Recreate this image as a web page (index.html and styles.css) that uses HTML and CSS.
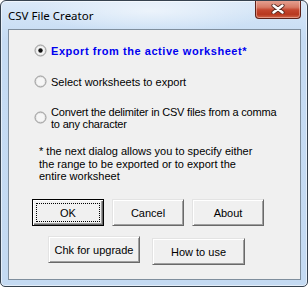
FILE: index.html
```html
<!DOCTYPE html>
<html lang="en">
<head>
    <meta charset="UTF-8">
    <meta name="viewport" content="width=device-width, initial-scale=1.0">
    <title>CSV File Creator</title>
    <link rel="stylesheet" href="styles.css">
</head>
<body>
    <div class="window">
        <div class="titlebar">
            <span class="title">CSV File Creator</span>
            <div class="close-btn">
                <svg width="14" height="10" viewBox="0 0 14 10">
                    <path d="M2.5 1.5 L11.5 8.5 M11.5 1.5 L2.5 8.5" stroke="#5a2a22" stroke-width="4.2" stroke-linecap="round"/>
                    <path d="M2.5 1.5 L11.5 8.5 M11.5 1.5 L2.5 8.5" stroke="#ffffff" stroke-width="2.4" stroke-linecap="round"/>
                </svg>
            </div>
        </div>

        <div class="client">
            <label class="option first">
                <svg class="radio" width="13" height="13" viewBox="0 0 13 13">
                    <circle cx="6.5" cy="6.5" r="5.5" fill="#e2e2e2" stroke="#979797"/>
                    <circle cx="6.5" cy="6.5" r="4" fill="#f6f6f6"/>
                    <circle cx="6.5" cy="6.5" r="2.2" fill="#111"/>
                </svg>
                <span class="option-text bold">Export from the active worksheet*</span>
            </label>

            <label class="option second">
                <svg class="radio" width="13" height="13" viewBox="0 0 13 13">
                    <circle cx="6.5" cy="6.5" r="5.5" fill="#e2e2e2" stroke="#979797"/>
                    <circle cx="6.5" cy="6.5" r="4" fill="#f6f6f6"/>
                </svg>
                <span class="option-text">Select worksheets to export</span>
            </label>

            <label class="option third">
                <svg class="radio" width="13" height="13" viewBox="0 0 13 13">
                    <circle cx="6.5" cy="6.5" r="5.5" fill="#e2e2e2" stroke="#979797"/>
                    <circle cx="6.5" cy="6.5" r="4" fill="#f6f6f6"/>
                </svg>
                <span class="option-text multi">Convert the delimiter in CSV files from a comma<br>to any character</span>
            </label>

            <p class="note">* the next dialog allows you to specify either<br>the range to be exported or to export the<br>entire worksheet</p>

            <div class="btn-row main-row">
                <button class="btn btn-default">OK</button>
                <button class="btn">Cancel</button>
                <button class="btn">About</button>
            </div>

            <div class="btn-row extra-row">
                <button class="btn wide">Chk for upgrade</button>
                <button class="btn wide lower">How to use</button>
            </div>
        </div>
    </div>
</body>
</html>
```

FILE: styles.css
```css
body {
    margin: 0;
    padding: 0;
    background: #fff;
}

.window {
    width: 308px;
    height: 287px;
    box-sizing: border-box;
    border: 1px solid #36424f;
    border-radius: 6px 6px 5px 5px;
    background: linear-gradient(to bottom, #dbe9f8 0px, #cfe2f6 18px, #c5dbf3 40px, #c4daf2 100%);
    box-shadow: inset 0 0 0 1px rgba(255, 255, 255, 0.55);
    overflow: hidden;
}

.titlebar {
    height: 28px;
    display: flex;
    align-items: flex-start;
    justify-content: space-between;
    background: radial-gradient(ellipse 120px 22px at 150px 10px, rgba(255, 255, 255, 0.55), rgba(255, 255, 255, 0));
}

.title {
    font-family: "Noto Sans", "Open Sans", sans-serif;
    font-size: 11.5px;
    line-height: 16px;
    color: #000;
    margin: 7px 0 0 7px;
}

.close-btn {
    width: 46px;
    height: 19px;
    margin: -1px 6px 0 0;
    box-sizing: border-box;
    border: 1px solid #5e2118;
    border-top: none;
    border-radius: 0 0 4px 4px;
    background: linear-gradient(to bottom, #e7a596 0%, #d77b66 40%, #c4462f 55%, #b8381f 80%, #d0654a 100%);
    box-shadow: inset 0 0 0 1px rgba(255, 220, 210, 0.45);
    display: flex;
    align-items: center;
    justify-content: center;
}

.client {
    width: 293px;
    height: 251px;
    margin-left: 7px;
    box-sizing: border-box;
    border: 1px solid #7f8e9d;
    background: #f0f0f0;
    padding-top: 15px;
    font-family: "Liberation Sans", Arial, sans-serif;
    font-size: 11px;
    color: #000;
}

.option {
    display: flex;
    align-items: center;
    gap: 4px;
    padding-left: 25px;
}

.radio {
    flex: none;
    margin-top: -2px;
}

.option-text {
    line-height: 13px;
}

.option-text.bold {
    font-weight: bold;
    color: #0000f0;
    letter-spacing: 0.55px;
}

.option-text.multi {
    line-height: 12px;
    letter-spacing: -0.2px;
}

.second {
    margin-top: 18px;
}

.third {
    margin-top: 17px;
}

.note {
    margin: 15px 0 0 0;
    padding-left: 30px;
    line-height: 12.5px;
}

.btn-row {
    display: flex;
    align-items: flex-start;
}

.main-row {
    margin-top: 16.5px;
    padding-left: 23px;
    gap: 8px;
}

.extra-row {
    margin-top: 10px;
    padding-left: 39px;
    gap: 12px;
}

.btn {
    width: 72px;
    height: 27px;
    padding: 0;
    box-sizing: border-box;
    font-family: "Liberation Sans", Arial, sans-serif;
    font-size: 11px;
    color: #000;
    background: #f0f0f0;
    border: 1px solid;
    border-color: #e3e3e3 #696969 #696969 #e3e3e3;
    box-shadow: inset 1px 1px 0 #fff, inset -1px -1px 0 #a0a0a0;
}

.btn-default {
    border-color: #000;
    box-shadow: inset 1px 1px 0 #fff, inset -1px -1px 0 #696969, inset -2px -2px 0 #a0a0a0;
    outline: 1px dotted #000;
    outline-offset: -5px;
}

.btn.wide {
    width: 92px;
}

.btn.lower {
    width: 93px;
    margin-top: 2px;
}
```
